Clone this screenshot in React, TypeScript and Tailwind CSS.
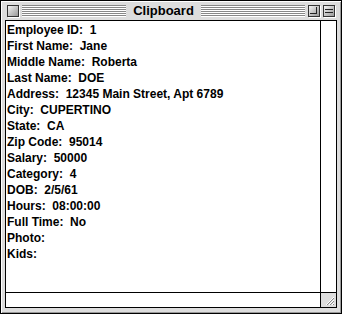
import React from 'react';

const lines: [string, string][] = [
  ['Employee ID:', '1'],
  ['First Name:', 'Jane'],
  ['Middle Name:', 'Roberta'],
  ['Last Name:', 'DOE'],
  ['Address:', '12345 Main Street, Apt 6789'],
  ['City:', 'CUPERTINO'],
  ['State:', 'CA'],
  ['Zip Code:', '95014'],
  ['Salary:', '50000'],
  ['Category:', '4'],
  ['DOB:', '2/5/61'],
  ['Hours:', '08:00:00'],
  ['Full Time:', 'No'],
  ['Photo:', ''],
  ['Kids:', ''],
];

const Stripes = () => (
  <div className="flex-1 h-[11px] flex flex-col justify-between">
    {[0, 1, 2, 3, 4, 5].map((i) => (
      <div key={i} className="h-[1px] bg-[#888] shadow-[0_1px_0_#fff]" />
    ))}
  </div>
);

const BoxButton = ({ children }: { children?: React.ReactNode }) => (
  <div className="w-[12px] h-[12px] border border-[#333] bg-gradient-to-br from-[#f4f4f4] to-[#999] relative shadow-[1px_1px_0_#fff]">
    {children}
  </div>
);

export default function App() {
  return (
    <div
      className="w-[342px] h-[314px] bg-[#dddddd] border border-black flex flex-col shadow-[inset_1px_1px_0_#fff,inset_-1px_-1px_0_#999]"
      style={{ fontFamily: '"Liberation Sans", Arial, sans-serif' }}
    >
      {/* Title bar */}
      <div className="h-[19px] flex items-center px-[6px] gap-[3px]">
        <BoxButton />
        <Stripes />
        <span className="px-[4px] text-[13px] font-bold text-black leading-none">Clipboard</span>
        <Stripes />
        <div className="flex gap-[3px]">
          <BoxButton>
            <div className="absolute left-[1px] top-[1px] w-[7px] h-[7px] border-r border-b border-[#222]" />
          </BoxButton>
          <BoxButton>
            <div className="absolute left-[1px] right-[1px] top-[3px] h-[1px] bg-[#222]" />
            <div className="absolute left-[1px] right-[1px] top-[6px] h-[1px] bg-[#222]" />
          </BoxButton>
        </div>
      </div>

      {/* Body */}
      <div className="px-[4px]">
        <div className="h-[288px] border border-black bg-white flex flex-col">
          <div className="flex-1 flex min-h-0">
            <div className="flex-1 border-r border-black pt-[1px] pl-[1px] overflow-hidden">
              {lines.map(([k, v]) => (
                <div key={k} className="h-[16px] leading-[16px] text-[12px] font-bold text-black whitespace-pre">
                  {k}
                  {v ? `  ${v}` : ''}
                </div>
              ))}
            </div>
            <div className="w-[15px]" />
          </div>
          <div className="h-[15px] border-t border-black flex">
            <div className="flex-1 border-r border-black" />
            <div className="w-[15px] bg-[#dddddd] flex items-center justify-center">
              <svg width="12" height="12" viewBox="0 0 12 12">
                {[0, 3, 6].map((o) => (
                  <g key={o}>
                    <line x1={3 + o} y1={11} x2={11} y2={3 + o} stroke="#fff" strokeWidth="1" />
                    <line x1={4 + o} y1={11} x2={11} y2={4 + o} stroke="#888" strokeWidth="1" />
                  </g>
                ))}
              </svg>
            </div>
          </div>
        </div>
      </div>
    </div>
  );
}
